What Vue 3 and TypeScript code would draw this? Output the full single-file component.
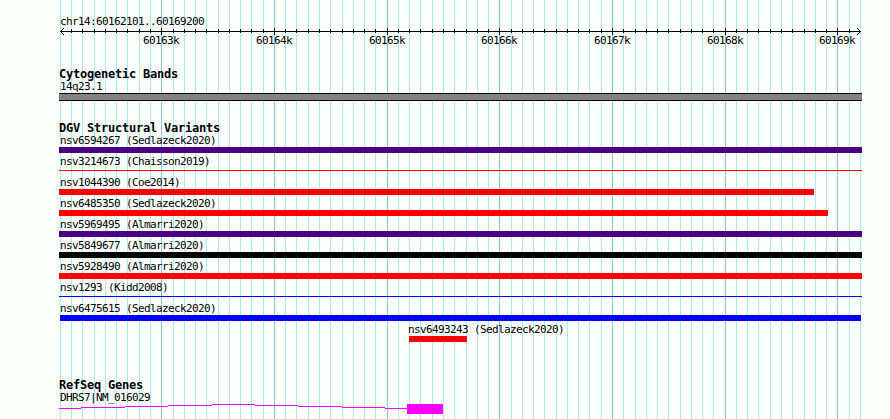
<template>
  <div class="browser">
    <svg class="grid" width="890" height="419" shape-rendering="crispEdges">
      <rect
        v-for="line in gridLines"
        :key="line.x"
        :x="line.x"
        y="0"
        width="1"
        height="419"
        :class="line.major ? 'grid-major' : 'grid-minor'"
      />
    </svg>

    <header class="ruler">
      <div class="label region">chr14:60162101..60169200</div>
      <svg class="axis" width="803" height="7" viewBox="59 28 803 7" shape-rendering="crispEdges">
        <rect x="60" y="31" width="801" height="1" />
        <rect
          v-for="line in innerLines"
          :key="line.x"
          :x="line.x"
          :y="line.major ? 28 : 29"
          width="1"
          :height="line.major ? 7 : 4"
        />
        <path d="M61 30h1v1h-1zM62 29h1v1h-1zM63 28h1v1h-1zM61 32h1v1h-1zM62 33h1v1h-1zM63 34h1v1h-1z" />
        <path d="M859 30h1v1h-1zM858 29h1v1h-1zM857 28h1v1h-1zM859 32h1v1h-1zM858 33h1v1h-1zM857 34h1v1h-1z" />
      </svg>
      <svg class="scale" width="803" height="14" viewBox="59 0 803 14">
        <text v-for="line in majorLines" :key="line.x" :x="line.x - 18" y="9">{{ line.label }}</text>
      </svg>
    </header>

    <section class="track bands">
      <h3 class="title">Cytogenetic Bands</h3>
      <div class="label">14q23.1</div>
      <div class="band"></div>
    </section>

    <section class="track variants">
      <h3 class="title">DGV Structural Variants</h3>
      <div
        v-for="v in variants"
        :key="v.name"
        class="variant"
        :style="{ marginLeft: `${v.start - 59}px` }"
      >
        <div class="label" :class="{ flush: v.start > 60, inset: v.start === 60 }">{{ v.name }} ({{ v.study }})</div>
        <div
          class="bar"
          :class="{ thin: v.thin }"
          :style="{ width: `${v.end - v.start}px`, background: v.color }"
        ></div>
      </div>
    </section>

    <section class="track genes">
      <h3 class="title">RefSeq Genes</h3>
      <div class="label">DHRS7|NM_016029</div>
      <svg class="gene" width="803" height="11" viewBox="59 404 803 11" shape-rendering="crispEdges">
        <rect
          v-for="s in intron"
          :key="s.x"
          :x="s.x"
          :y="s.y"
          :width="s.w"
          height="1"
        />
        <rect x="407" y="404" width="36" height="10" />
      </svg>
    </section>
  </div>
</template>

<script setup lang="ts">
interface GridLine {
  x: number
  major: boolean
  label: string
}

interface Variant {
  name: string
  study: string
  start: number
  end: number
  color: string
  thin?: boolean
}

// one line every 100 bp, 7100 bp over 800 px
const gridLines: GridLine[] = Array.from({ length: 72 }, (_, i) => {
  const bp = 60162100 + i * 100
  return {
    x: Math.floor(60.38 + (i * 800) / 71),
    major: bp % 1000 === 0,
    label: `${bp / 1000}k`
  }
})

const innerLines = gridLines.slice(1, -1)
const majorLines = gridLines.filter(line => line.major)

const variants: Variant[] = [
  { name: 'nsv6594267', study: 'Sedlazeck2020', start: 59, end: 862, color: '#4b0082' },
  { name: 'nsv3214673', study: 'Chaisson2019', start: 59, end: 862, color: '#ff0000', thin: true },
  { name: 'nsv1044390', study: 'Coe2014', start: 59, end: 814, color: '#ff0000' },
  { name: 'nsv6485350', study: 'Sedlazeck2020', start: 59, end: 828, color: '#ff0000' },
  { name: 'nsv5969495', study: 'Almarri2020', start: 59, end: 862, color: '#4b0082' },
  { name: 'nsv5849677', study: 'Almarri2020', start: 59, end: 862, color: '#000000' },
  { name: 'nsv5928490', study: 'Almarri2020', start: 59, end: 862, color: '#ff0000' },
  { name: 'nsv1293', study: 'Kidd2008', start: 59, end: 862, color: '#0000ff', thin: true },
  { name: 'nsv6475615', study: 'Sedlazeck2020', start: 60, end: 861, color: '#0000ff' },
  { name: 'nsv6493243', study: 'Sedlazeck2020', start: 409, end: 467, color: '#ff0000' }
]

const intron = [
  { x: 59, y: 408, w: 22 },
  { x: 81, y: 407, w: 44 },
  { x: 125, y: 406, w: 43 },
  { x: 168, y: 405, w: 44 },
  { x: 212, y: 404, w: 43 },
  { x: 255, y: 405, w: 43 },
  { x: 298, y: 406, w: 44 },
  { x: 342, y: 407, w: 43 },
  { x: 385, y: 408, w: 22 }
]
</script>

<style>
body {
  margin: 0;
  background: #fcfefc;
}
</style>

<style scoped>
.browser {
  position: relative;
  box-sizing: border-box;
  width: 890px;
  height: 419px;
  padding: 15px 28px 0 59px;
  overflow: hidden;
  color: #000;
  font-family: "DejaVu Sans Mono", "Liberation Mono", monospace;
  font-size: 11px;
}

.grid {
  position: absolute;
  top: 0;
  left: 0;
}

.grid-minor {
  fill: #acecec;
}

.grid-major {
  fill: #84c6ec;
}

.ruler,
.track {
  position: relative;
}

.ruler svg,
.gene {
  display: block;
}

.label {
  height: 13px;
  line-height: 13px;
  padding-left: 1px;
  letter-spacing: -0.622px;
  white-space: pre;
}

.label.inset {
  padding-left: 0;
}

.label.flush {
  padding-left: 0;
  margin-left: -1px;
}

.title {
  height: 12px;
  margin: 0;
  line-height: 13px;
  font-size: 12px;
  font-weight: 700;
  letter-spacing: -0.224px;
  white-space: pre;
}

.ruler .scale {
  overflow: visible;
  font-size: 11px;
  letter-spacing: -0.622px;
}

.bands {
  margin-top: 19px;
}

.band {
  box-sizing: border-box;
  height: 8px;
  border-top: 1px solid #000;
  border-bottom: 1px solid #000;
  background: #848284;
}

.variants {
  margin-top: 21px;
}

.variant {
  height: 21px;
}

.bar {
  height: 6px;
}

.bar.thin {
  height: 1px;
  margin-top: 2px;
}

.genes {
  margin-top: 35px;
}

.gene {
  fill: #ff00ff;
}
</style>
